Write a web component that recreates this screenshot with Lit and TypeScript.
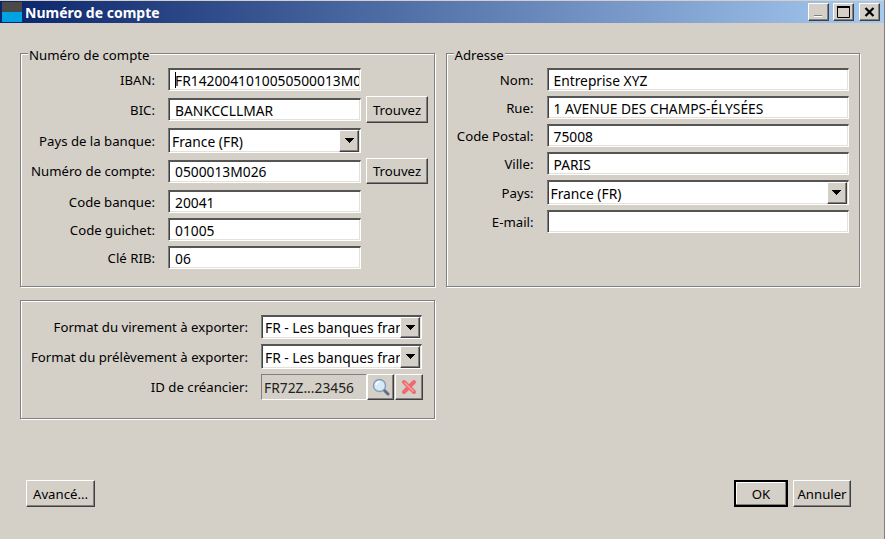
import { LitElement, html, css, svg } from "lit";
import { customElement } from "lit/decorators.js";

const arrow = svg`<svg width="11" height="6" viewBox="0 0 11 6"><path d="M1 0h9v1h-1v1h-1v1h-1v1h-1v1h-1v-1h-1v-1h-1v-1h-1v-1h-1z" fill="#000"/></svg>`;

@customElement("app-root")
export class AppRoot extends LitElement {
  static styles = css`
    :host {
      display: flex; flex-direction: column; width: 885px; height: 539px; box-sizing: border-box;
      background: #d4d0c8; font: 13.2px "Noto Sans", sans-serif; color: #000;
      border-right: 1px solid #808080; overflow: hidden; padding-top: 1px;
    }
    .title {
      height: 22px; flex: none; display: flex; align-items: center; gap: 3px; padding: 0 4px 0 2px;
      background: linear-gradient(90deg, #0a246a, #a6caf0);
      color: #fff; font: 700 14px "Noto Sans", sans-serif;
    }
    .logo { width: 20px; height: 20px; flex: none; background: linear-gradient(#4a4a4a 50%, #00a2e2 50%); }
    .title .t { flex: 1; }
    .wb {
      width: 21px; height: 18px; box-sizing: border-box; background: #d4d0c8; display: flex; align-items: center; justify-content: center;
      border: 1px solid; border-color: #fff #404040 #404040 #fff; box-shadow: inset -1px -1px 0 #808080;
    }
    .wb + .wb { margin-left: 1px; }
    .wb.close { margin-left: 2px; }
    .main { flex: 1; display: flex; flex-direction: column; padding: 30px 24px 32px 20px; }
    .top { display: flex; gap: 11px; }
    .group { position: relative; width: 415px; box-sizing: border-box; border: 1px solid #808080; box-shadow: inset 1px 1px 0 #fff, 1px 1px 0 #fff; }
    .legend { position: absolute; left: 7px; top: -8px; background: #d4d0c8; padding: 0 1px; line-height: 18px; }
    .g1 { height: 234px; padding-top: 14px; }
    .g3 { height: 119px; margin-top: 13px; padding-top: 14px; }
    .rows { display: flex; flex-direction: column; gap: 5px; }
    .row { display: grid; align-items: center; }
    .left .row { grid-template-columns: 147px 193px 67px; column-gap: 0; }
    .left .row > .lab { padding-right: 13px; }
    .left .row > .btn { margin-left: 5px; width: 62px; }
    .right .row { grid-template-columns: 87px 302px; column-gap: 13px; }
    .h23 { height: 23px; } .h27 { height: 27px; } .h25 { height: 25px; } .h26 { height: 26px; } .h24 { height: 24px; }
    .mt1 { margin-top: 1px; }
    .lab { text-align: right; white-space: nowrap; }
    .field, .combo, .idf {
      box-sizing: border-box; height: 100%; display: flex; align-items: center; position: relative; overflow: hidden; white-space: nowrap;
      font-size: 13.8px;
    }
    .field, .combo {
      background: #fff; border-style: solid; border-width: 2px 1px 1px 1px;
      border-color: #555 #fff #fff #808080;
      box-shadow: inset 1px 0 0 #404040, inset -1px -1px 0 #e4e1da;
    }
    .field { padding-left: 6px; height: 23px; }
    .clip { overflow: hidden; width: 100%; margin-right: 1px; }
    .caret { position: absolute; left: 6px; top: 2px; bottom: 2px; width: 1px; background: #000; }
    .combo { padding-left: 3px; }
    .combo .val { flex: 1; overflow: hidden; min-width: 0; }
    .cbtn {
      flex: none; width: 20px; height: 100%; box-sizing: border-box; background: #d4d0c8; display: flex; align-items: center; justify-content: center;
      border: 1px solid; border-color: #fff #404040 #404040 #fff; box-shadow: inset -1px -1px 0 #808080;
      margin-right: 1px;
    }
    .btn {
      box-sizing: border-box; background: #d4d0c8; display: flex; align-items: center; justify-content: center; height: 27px; white-space: nowrap;
      border: 1px solid; border-color: #fff #404040 #404040 #fff; box-shadow: inset -1px -1px 0 #808080;
    }
    .h26 > .btn { height: 26px; }
    .g3 .row { grid-template-columns: 227px 161px; column-gap: 13px; }
    .idrow { display: flex; height: 26px; }
    .idf { width: 106px; flex: none; padding-left: 2px; background: #d4d0c8; border-style: solid; border-width: 1px; border-color: #808080 #fff #fff #808080; color: #222; }
    .ic { width: 27px; height: 26px; flex: none; }
    .ic + .ic { margin-left: 1px; width: 28px; }
    .foot { margin-top: auto; display: flex; align-items: center; padding-left: 6px; }
    .foot .adv { width: 69px; }
    .foot .sp { flex: 1; }
    .foot .ok { width: 54px; border: 2px solid #000; box-shadow: inset -1px -1px 0 #808080, inset 1px 1px 0 #fff; }
    .foot .ann { width: 58px; margin-left: 5px; margin-right: 9px; }
  `;

  private left() {
    return html`<div class="group g1 left"><span class="legend">Numéro de compte</span>
      <div class="rows">
        <div class="row h23"><span class="lab">IBAN:</span><div class="field"><div class="clip">FR1420041010050500013M026 06</div><span class="caret"></span></div></div>
        <div class="row h27"><span class="lab">BIC:</span><div class="field">BANKCCLLMAR</div><div class="btn">Trouvez</div></div>
        <div class="row h25"><span class="lab">Pays de la banque:</span><div class="combo"><span class="val">France (FR)</span><span class="cbtn">${arrow}</span></div></div>
        <div class="row h26"><span class="lab">Numéro de compte:</span><div class="field">0500013M026</div><div class="btn">Trouvez</div></div>
        <div class="row h23 mt1"><span class="lab">Code banque:</span><div class="field">20041</div></div>
        <div class="row h23"><span class="lab">Code guichet:</span><div class="field">01005</div></div>
        <div class="row h23"><span class="lab">Clé RIB:</span><div class="field">06</div></div>
      </div></div>`;
  }

  private right() {
    return html`<div class="group g1 right"><span class="legend">Adresse</span>
      <div class="rows">
        <div class="row h23"><span class="lab">Nom:</span><div class="field">Entreprise XYZ</div></div>
        <div class="row h23"><span class="lab">Rue:</span><div class="field">1 AVENUE DES CHAMPS-ÉLYSÉES</div></div>
        <div class="row h23"><span class="lab">Code Postal:</span><div class="field">75008</div></div>
        <div class="row h23"><span class="lab">Ville:</span><div class="field">PARIS</div></div>
        <div class="row h25"><span class="lab">Pays:</span><div class="combo"><span class="val">France (FR)</span><span class="cbtn">${arrow}</span></div></div>
        <div class="row h23"><span class="lab">E-mail:</span><div class="field"></div></div>
      </div></div>`;
  }

  private bottom() {
    return html`<div class="group g3">
      <div class="rows">
        <div class="row h24"><span class="lab">Format du virement à exporter:</span><div class="combo"><span class="val">FR - Les banques françaises</span><span class="cbtn">${arrow}</span></div></div>
        <div class="row h25"><span class="lab">Format du prélèvement à exporter:</span><div class="combo"><span class="val">FR - Les banques françaises</span><span class="cbtn">${arrow}</span></div></div>
        <div class="row h26"><span class="lab">ID de créancier:</span><div class="idrow">
          <div class="idf">FR72Z...23456</div>
          <div class="btn ic"><svg width="18" height="18" viewBox="0 0 18 18"><path d="M11.5 11.5l4.5 4.5" stroke="#5f6f86" stroke-width="3" stroke-linecap="round"/><circle cx="7.5" cy="7.5" r="6" fill="#d8e9f8" stroke="#7f9dbe" stroke-width="1.4"/><path d="M4.2 7a3.3 3.3 0 0 1 3.3-3.3" stroke="#fff" stroke-width="1.4" fill="none"/></svg></div>
          <div class="btn ic"><svg width="16" height="16" viewBox="0 0 16 16"><path d="M3 3l10 10M13 3L3 13" stroke="#ee6a70" stroke-width="4" stroke-linecap="round"/><path d="M3.5 3.5l9 9" stroke="#f7a5a6" stroke-width="1.2"/></svg></div>
        </div></div>
      </div></div>`;
  }

  render() {
    return html`
      <div class="title"><span class="logo"></span><span class="t">Numéro de compte</span>
        <div class="wb"><svg width="9" height="9" viewBox="0 0 9 9"><path d="M0 7h8v2H0z" fill="#808080"/><path d="M0 8h8v1H0z" fill="#fff"/></svg></div>
        <div class="wb"><svg width="13" height="12" viewBox="0 0 13 12"><path d="M.5 1.5h12v10H.5z" fill="none" stroke="#000"/><path d="M0 0h13v2H0z"/></svg></div>
        <div class="wb close"><svg width="11" height="10" viewBox="0 0 11 10"><path d="M1.5 1l8 8M9.5 1l-8 8" stroke="#000" stroke-width="2.2"/></svg></div>
      </div>
      <div class="main">
        <div class="top">${this.left()}${this.right()}</div>
        ${this.bottom()}
        <div class="foot">
          <div class="btn adv">Avancé...</div><span class="sp"></span>
          <div class="btn ok">OK</div><div class="btn ann">Annuler</div>
        </div>
      </div>`;
  }
}
